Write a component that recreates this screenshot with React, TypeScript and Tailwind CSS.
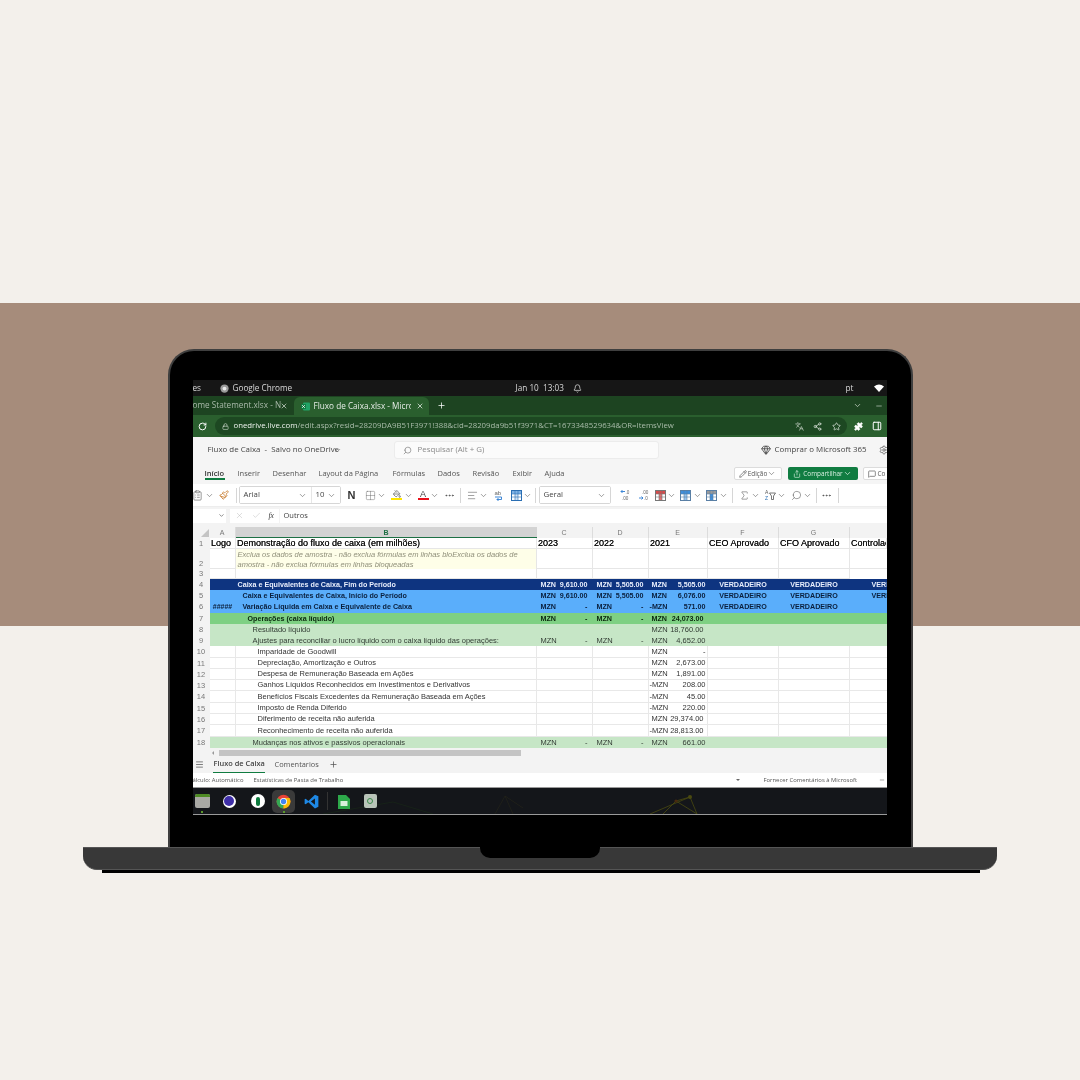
import {
  AlignLeft, ChevronDown, Gem, Lock, Menu, MessageSquare, MoreHorizontal, PaintBucket, Paintbrush, Pencil, Plus,
  Puzzle, RotateCw, Search, Settings, Share2, Sigma, Star, X, Check, ClipboardList, Bell, Minus, Grid2x2,
  PanelRight, Languages, Share,
} from "lucide-react";

const uiFont = "font-['Open_Sans',sans-serif]";

interface rowProps {
  n: number;
  label: string;
  indent: string;
  c?: string[];
  d?: string[];
  e?: string[];
  flags?: number;
  a?: string;
  bg: string;
  text: string;
  bold?: boolean;
}

const dash = ["MZN", "-"];

const rows: rowProps[] = [
  { n: 4, label: "Caixa e Equivalentes de Caixa, Fim do Período", indent: "pl-[2px]", c: ["MZN", "9,610.00"], d: ["MZN", "5,505.00"], e: ["MZN", "5,505.00"], flags: 3, bg: "bg-[#0e3480]", text: "text-[#e8eefc]", bold: true },
  { n: 5, label: "Caixa e Equivalentes de Caixa, Início do Período", indent: "pl-[7px]", c: ["MZN", "9,610.00"], d: ["MZN", "5,505.00"], e: ["MZN", "6,076.00"], flags: 3, bg: "bg-[#5aaefb]", text: "text-[#0a1f3c]", bold: true },
  { n: 6, label: "Variação Líquida em Caixa e Equivalente de Caixa", indent: "pl-[7px]", a: "#####", c: dash, d: dash, e: ["-MZN", "571.00"], flags: 2, bg: "bg-[#5aaefb]", text: "text-[#0a1f3c]", bold: true },
  { n: 7, label: "Operações (caixa líquido)", indent: "pl-[12px]", c: dash, d: dash, e: ["MZN", "24,073.00"], bg: "bg-[#7ed083]", text: "text-[#0b260e]", bold: true },
  { n: 8, label: "Resultado líquido", indent: "pl-[17px]", e: ["MZN", "18,760.00"], bg: "bg-[#c6e6c6]", text: "text-[#333d35]" },
  { n: 9, label: "Ajustes para reconciliar o lucro líquido com o caixa líquido das operações:", indent: "pl-[17px]", c: dash, d: dash, e: ["MZN", "4,652.00"], bg: "bg-[#c6e6c6]", text: "text-[#333d35]" },
  { n: 10, label: "Imparidade de Goodwill", indent: "pl-[22px]", e: ["MZN", "-"], bg: "bg-white", text: "text-[#333]" },
  { n: 11, label: "Depreciação, Amortização e Outros", indent: "pl-[22px]", e: ["MZN", "2,673.00"], bg: "bg-white", text: "text-[#333]" },
  { n: 12, label: "Despesa de Remuneração Baseada em Ações", indent: "pl-[22px]", e: ["MZN", "1,891.00"], bg: "bg-white", text: "text-[#333]" },
  { n: 13, label: "Ganhos Líquidos Reconhecidos em Investimentos e Derivativos", indent: "pl-[22px]", e: ["-MZN", "208.00"], bg: "bg-white", text: "text-[#333]" },
  { n: 14, label: "Benefícios Fiscais Excedentes da Remuneração Baseada em Ações", indent: "pl-[22px]", e: ["-MZN", "45.00"], bg: "bg-white", text: "text-[#333]" },
  { n: 15, label: "Imposto de Renda Diferido", indent: "pl-[22px]", e: ["-MZN", "220.00"], bg: "bg-white", text: "text-[#333]" },
  { n: 16, label: "Diferimento de receita não auferida", indent: "pl-[22px]", e: ["MZN", "29,374.00"], bg: "bg-white", text: "text-[#333]" },
  { n: 17, label: "Reconhecimento de receita não auferida", indent: "pl-[22px]", e: ["-MZN", "28,813.00"], bg: "bg-white", text: "text-[#333]" },
  { n: 18, label: "Mudanças nos ativos e passivos operacionais", indent: "pl-[17px]", c: dash, d: dash, e: ["MZN", "661.00"], bg: "bg-[#c6e6c6]", text: "text-[#333d35]" },
];

const tallRows = [6, 10, 14, 17];

const gridCols = "grid grid-cols-[17px_26px_301px_56px_56px_59px_71px_71px_37px] grid-rows-[minmax(0,1fr)]";

const ChromeLogo = ({ size }: { size: number }) => (
  <svg width={size} height={size} viewBox="0 0 24 24">
    <circle cx="12" cy="12" r="11" fill="#ea4335" />
    <path d="M12 12 L2.4 6.5 A11 11 0 0 0 12 23 Z" fill="#34a853" />
    <path d="M12 12 L12 23 A11 11 0 0 0 21.6 6.5 L12 6.5 Z" fill="#fbbc05" />
    <circle cx="12" cy="12" r="5.6" fill="#fff" />
    <circle cx="12" cy="12" r="4.3" fill="#4285f4" />
  </svg>
);

// small table glyph used by the conditional format / table style buttons
const MiniTable = ({ head, cell, line, className = "" }: { head: string; cell: string; line: string; className?: string }) => (
  <svg width="11" height="11" viewBox="0 0 11 11" className={"shrink-0 " + className}>
    <rect x="0.5" y="0.5" width="10" height="10" fill="#fff" stroke={line} />
    <rect x="1" y="1" width="9" height="3" fill={head} />
    <rect x="4" y="4" width="3" height="6" fill={cell} />
    <path d="M0.5 4 H10.5 M0.5 7 H10.5 M4 0.5 V10.5 M7 0.5 V10.5" stroke={line} strokeWidth="0.6" />
  </svg>
);

const DecimalIcon = ({ top, bottom, left }: { top: string; bottom: string; left?: boolean }) => (
  <svg width="11" height="12" viewBox="0 0 11 12" className="shrink-0">
    <path d={left ? "M5 2.5 H1 M2.5 1 L1 2.5 L2.5 4" : "M1 9 H5 M3.5 7.5 L5 9 L3.5 10.5"} stroke="#2b7cd3" strokeWidth="0.9" fill="none" />
    <text x={left ? 5.5 : 4} y="4.5" fontSize="4.6" fill="#666" fontFamily="Liberation Sans">{top}</text>
    <text x={left ? 2 : 6} y="10.5" fontSize="4.6" fill="#666" fontFamily="Liberation Sans">{bottom}</text>
  </svg>
);

const Chev = ({ className = "" }: { className?: string }) => (
  <ChevronDown size={9} strokeWidth={1.5} className={"shrink-0 text-[#555] " + className} />
);

const Sep = ({ className = "" }: { className?: string }) => <div className={"w-px h-[15px] bg-[#d6d6d6] shrink-0 " + className} />;

const Money = ({ v, className }: { v?: string[]; className: string }) => (
  <div className={"flex justify-between items-center border-r border-[#e6e6e6] overflow-hidden " + className}>
    {v && (
      <>
        <span className={v[0] === "MZN" ? "ml-[2px]" : ""}>{v[0]}</span>
        <span className={v[1].length > 8 ? "mr-[2px]" : ""}>{v[1]}</span>
      </>
    )}
  </div>
);

const Row = ({ r }: { r: rowProps }) => {
  const white = r.bg === "bg-white";
  const line = white ? "border-b border-[#e8e8e8]" : "";
  const divider = white ? " border-r border-[#e8e8e8]" : "";
  const size = r.bold ? "text-[7.15px] font-bold " : "text-[7.5px] ";
  const height = tallRows.includes(r.n) ? "h-[12px] " : "h-[11px] ";
  return (
    <div className={gridCols + " " + height + "font-['Liberation_Sans',sans-serif] leading-[10px] " + size + r.text}>
      <div className="bg-[#f3f3f3] text-[#777] text-[7.5px] font-normal flex items-center justify-center">{r.n}</div>
      <div className={r.bg + " flex items-center justify-center text-[7px] " + line + divider}>{r.a}</div>
      <div className={r.bg + " flex items-center whitespace-nowrap " + r.indent + " " + line + divider}>{r.label}</div>
      <Money v={r.c} className={r.bg + " pl-[2px] pr-[4px] " + (white ? "border-[#e8e8e8] border-b" : "border-r-transparent")} />
      <Money v={r.d} className={r.bg + " pl-[2px] pr-[4px] " + (white ? "border-[#e8e8e8] border-b" : "border-r-transparent")} />
      <Money v={r.e} className={r.bg + " pl-[1px] pr-[1px] " + (white ? "border-[#e8e8e8] border-b" : "border-r-transparent")} />
      <div className={r.bg + " flex items-center justify-center " + line + divider}>{r.flags ? "VERDADEIRO" : ""}</div>
      <div className={r.bg + " flex items-center justify-center " + line + divider}>{r.flags ? "VERDADEIRO" : ""}</div>
      <div className={r.bg + " flex items-center whitespace-nowrap overflow-hidden pl-[22px] " + line}>{r.flags === 3 ? "VERDADEIRO" : ""}</div>
    </div>
  );
};

const TopBar = () => (
  <div className={"h-[16px] bg-[#161616] flex items-center text-[8.2px] text-[#d8d8d8] " + uiFont}>
    <span className="w-[27px]">es</span>
    <svg width="9" height="9" viewBox="0 0 24 24" className="shrink-0">
      <circle cx="12" cy="12" r="11" fill="#9a9a9a" />
      <circle cx="12" cy="12" r="5" fill="#e8e8e8" />
    </svg>
    <span className="ml-[4px] w-[283px]">Google Chrome</span>
    <span className="w-[57px]">Jan 10&nbsp; 13:03</span>
    <Bell size={9} className="shrink-0" />
    <span className="ml-[264px] w-[28px]">pt</span>
    <svg width="10" height="8" viewBox="0 0 10 8" className="shrink-0">
      <path d="M0 2.4 Q5 -1.4 10 2.4 L5 8 Z" fill="#fff" />
    </svg>
  </div>
);

const TabStrip = () => (
  <div className={"h-[19px] bg-[#1d4421] flex items-end text-[8.2px] " + uiFont}>
    <div className="w-[101px] h-[19px] flex items-center text-[#a9b9aa] whitespace-nowrap">
      <span className="w-[87px]">ome Statement.xlsx - N</span>
      <X size={8} className="text-[#dfe7df] shrink-0" />
    </div>
    <div className="w-[135px] h-[18px] bg-[#2a5f2e] rounded-t-[6px] flex items-center pl-[7px] text-[#e6ece6] whitespace-nowrap">
      <svg width="9" height="9" viewBox="0 0 9 9" className="shrink-0">
        <rect x="2" y="0.5" width="7" height="8" rx="1" fill="#21a366" />
        <rect x="0" y="2" width="5" height="5" rx="0.5" fill="#107c41" />
        <path d="M1 3 L4 6 M4 3 L1 6" stroke="#fff" strokeWidth="0.7" />
      </svg>
      <span className="ml-[4px] w-[97px] overflow-hidden">Fluxo de Caixa.xlsx - Micro</span>
      <X size={8} className="text-white shrink-0 ml-[5px]" />
    </div>
    <div className="h-[19px] flex items-center ml-[8px]">
      <Plus size={9} className="text-white" />
    </div>
    <div className="h-[19px] flex items-center ml-[407px]">
      <ChevronDown size={9} className="text-[#c8d4c8]" />
    </div>
    <div className="h-[19px] flex items-center ml-[13px]">
      <Minus size={8} className="text-[#c8d4c8]" />
    </div>
  </div>
);

const AddressBar = () => (
  <div className={"h-[22px] bg-[#2a5f2e] flex items-center text-[7.8px] " + uiFont}>
    <RotateCw size={9} strokeWidth={2.6} className="ml-[5px] text-white shrink-0" />
    <div className="ml-[8px] w-[632px] h-[18px] rounded-full bg-[#1d4822] flex items-center pl-[7px] whitespace-nowrap">
      <Lock size={7} className="text-[#d8e2d8] shrink-0" />
      <span className="ml-[5px] text-[#eef3ee]">onedrive.live.com</span>
      <span className="text-[#a9bcaa]">/edit.aspx?resid=28209DA9B51F3971!388&amp;cid=28209da9b51f3971&amp;CT=1673348529634&amp;OR=ItemsView</span>
      <Languages size={9} className="ml-auto text-[#b9c8ba] shrink-0" />
      <Share2 size={9} className="ml-[9px] text-[#d8e2d8] shrink-0" />
      <Star size={9} className="ml-[10px] mr-[6px] text-[#d8e2d8] shrink-0" />
    </div>
    <Puzzle size={9} fill="#fff" className="ml-[7px] text-white shrink-0" />
    <PanelRight size={10} strokeWidth={2.4} className="ml-[9px] text-white shrink-0" />
  </div>
);

const TitleRow = () => (
  <div className={"h-[26px] bg-[#f5f5f5] flex items-center text-[7.9px] text-[#444] whitespace-nowrap [&>*]:shrink-0 " + uiFont}>
    <span className="ml-[15px] w-[126px]">Fluxo de Caixa&nbsp; -&nbsp; Salvo no OneDrive</span>
    <Chev className="ml-[-1px]" />
    <div className="ml-[52px] w-[265px] h-[18px] bg-[#fbfbfb] border border-[#ececec] rounded-[3px] flex items-center pl-[8px] text-[#8a8a8a]">
      <Search size={9} className="-scale-x-100 shrink-0" />
      <span className="ml-[6px]">Pesquisar (Alt + G)</span>
    </div>
    <Gem size={10} className="ml-[102px] text-[#444]" />
    <span className="ml-[4px] w-[104px]">Comprar o Microsoft 365</span>
    <Settings size={10} className="text-[#666]" />
  </div>
);

const TabsRow = () => (
  <div className={"h-[21px] bg-[#f5f5f5] flex items-start pt-[4px] text-[7.5px] text-[#555] whitespace-nowrap [&>*]:shrink-0 " + uiFont}>
    <div className="ml-[12px] w-[33px] text-[#333] font-semibold relative h-[13px] leading-[13px]">
      Início
      <div className="absolute left-0 top-[11px] w-[20px] h-[1.5px] bg-[#107c41]" />
    </div>
    <span className="w-[35px] leading-[13px]">Inserir</span>
    <span className="w-[46px] leading-[13px]">Desenhar</span>
    <span className="w-[74px] leading-[13px]">Layout da Página</span>
    <span className="w-[45px] leading-[13px]">Fórmulas</span>
    <span className="w-[35px] leading-[13px]">Dados</span>
    <span className="w-[40px] leading-[13px]">Revisão</span>
    <span className="w-[32px] leading-[13px]">Exibir</span>
    <span className="w-[189px] leading-[13px]">Ajuda</span>
    <div className="w-[48px] h-[13px] bg-white border border-[#dcdcdc] rounded-[2px] flex items-center justify-center text-[6.4px]">
      <Pencil size={8} className="shrink-0 mr-[1px]" />
      Edição
      <Chev />
    </div>
    <div className="ml-[6px] w-[70px] h-[13px] bg-[#107c41] rounded-[2px] flex items-center justify-center text-[6.4px] text-[#d7eee0]">
      <Share size={8} className="shrink-0 mr-[2px]" />
      Compartilhar
      <ChevronDown size={9} className="shrink-0" />
    </div>
    <div className="ml-[5px] w-[30px] h-[13px] bg-white border border-[#dcdcdc] rounded-l-[2px] flex items-center pl-[4px] text-[6.4px]">
      <MessageSquare size={8} className="shrink-0 mr-[2px]" />
      Co
    </div>
  </div>
);

const Select = ({ text, className }: { text: string; className: string }) => (
  <div className={"h-[16px] bg-white flex items-center justify-between px-[4px] shrink-0 " + className}>
    <span>{text}</span>
    <Chev />
  </div>
);

const Toolbar = () => (
  <div className={"h-[23px] bg-white flex items-center text-[7.8px] text-[#444] border-b border-[#ededed] " + uiFont}>
    <ClipboardList size={11} strokeWidth={1.3} className="ml-[-1px] text-[#555] shrink-0" />
    <Chev className="ml-[2px]" />
    <Paintbrush size={10} className="ml-[5px] text-[#c87b2c] shrink-0" />
    <Sep className="ml-[7px]" />
    <div className="ml-[2px] w-[102px] flex rounded-[2px] border border-[#d6d6d6] shrink-0">
      <Select text="Arial" className="w-[72px] border-r border-[#e6e6e6]" />
      <Select text="10" className="w-[28px]" />
    </div>
    <span className="ml-[7px] w-[9px] text-[11px] leading-none font-bold text-[#333] font-['Liberation_Sans',sans-serif]">N</span>
    <Grid2x2 size={11} strokeWidth={1} className="ml-[8px] text-[#666] shrink-0" />
    <Chev className="ml-[1px]" />
    <div className="ml-[5px] w-[12px] flex flex-col items-center shrink-0">
      <PaintBucket size={8} className="text-[#555]" />
      <div className="w-[11px] h-[2.5px] bg-[#ffe600]" />
    </div>
    <Chev className="ml-[1px]" />
    <div className="ml-[5px] w-[11px] flex flex-col items-center shrink-0 text-[9px] leading-[8px] font-['Liberation_Sans',sans-serif]">
      A
      <div className="w-[11px] h-[2.5px] bg-[#e8101a]" />
    </div>
    <Chev className="ml-[1px]" />
    <MoreHorizontal size={11} className="ml-[5px] text-[#555] shrink-0" />
    <Sep className="ml-[5px]" />
    <AlignLeft size={11} strokeWidth={1.2} className="ml-[6px] text-[#555] shrink-0" />
    <Chev className="ml-[1px]" />
    <svg width="11" height="12" viewBox="0 0 11 12" className="ml-[5px] shrink-0">
      <text x="1.5" y="5.5" fontSize="6" fill="#666" fontFamily="Liberation Sans">ab</text>
      <path d="M2 8 H8.5 V10.5 H4 M5.5 9 L4 10.5 L5.5 12" stroke="#2b7cd3" strokeWidth="0.9" fill="none" />
    </svg>
    <MiniTable head="#7fb2e5" cell="#cfe2f5" line="#2b6fb3" className="ml-[7px]" />
    <Chev className="ml-[1px]" />
    <Sep className="ml-[3px]" />
    <div className="ml-[3px] w-[72px] rounded-[2px] border border-[#d6d6d6] shrink-0">
      <Select text="Geral" className="w-[70px] h-[15px]" />
    </div>
    <div className="ml-[9px] shrink-0">
      <DecimalIcon top=".0" bottom=".00" left />
    </div>
    <div className="ml-[7px] shrink-0">
      <DecimalIcon top=".00" bottom=".0" />
    </div>
    <MiniTable head="#d94b4b" cell="#e57373" line="#777" className="ml-[6px]" />
    <Chev className="ml-[1px]" />
    <MiniTable head="#3f8fdc" cell="#9cc6ee" line="#5a7fa5" className="ml-[4px]" />
    <Chev className="ml-[2px]" />
    <MiniTable head="#9a9a9a" cell="#3f8fdc" line="#5a7fa5" className="ml-[4px]" />
    <Chev className="ml-[2px]" />
    <Sep className="ml-[4px]" />
    <Sigma size={11} strokeWidth={1.2} className="ml-[6px] text-[#555] shrink-0" />
    <Chev className="ml-[1px]" />
    <svg width="11" height="12" viewBox="0 0 11 12" className="ml-[5px] shrink-0">
      <text x="0" y="5" fontSize="5" fill="#555" fontFamily="Liberation Sans">A</text>
      <text x="0" y="11" fontSize="5" fill="#2b6fb3" fontFamily="Liberation Sans">Z</text>
      <path d="M4.5 4 H10.5 L8.5 7 V10.5 L6.5 10.5 V7 Z" stroke="#555" strokeWidth="0.8" fill="none" />
    </svg>
    <Chev className="ml-[1px]" />
    <Search size={11} strokeWidth={1.2} className="ml-[5px] -scale-x-100 text-[#555] shrink-0" />
    <Chev className="ml-[1px]" />
    <Sep className="ml-[4px]" />
    <MoreHorizontal size={11} className="ml-[4px] text-[#555] shrink-0" />
    <Sep className="ml-[6px]" />
  </div>
);

const FormulaBar = () => (
  <div className={"h-[17px] bg-[#f3f3f3] flex items-center text-[7.5px] text-[#444] " + uiFont}>
    <div className="w-[33px] h-[14px] bg-white flex items-center justify-end pr-[1px] shrink-0">
      <ChevronDown size={7} />
    </div>
    <div className="ml-[4px] w-[49px] h-[14px] bg-white flex items-center shrink-0 pl-[5px]">
      <X size={9} strokeWidth={1} className="text-[#aaa]" />
      <Check size={9} strokeWidth={1} className="ml-[8px] text-[#aaa]" />
      <span className="ml-[8px] italic font-['Liberation_Serif',serif] text-[#333]">fx</span>
    </div>
    <div className="ml-[1px] flex-1 h-[14px] bg-white flex items-center pl-[4px]">Outros</div>
  </div>
);

const Sheet = () => {
  const head = "text-center text-[#777] text-[7px] border-r border-[#dcdcdc] leading-[11px]";
  const title = "text-[9px] [text-shadow:0_0_0.3px_#111] leading-[11px] text-[#111] whitespace-nowrap border-r border-b border-[#e6e6e6] pl-[1.5px]";
  const blank = "border-r border-b border-[#e6e6e6]";
  return (
    <div className="h-[232px] bg-[#f3f3f3] pt-[3px] font-['Liberation_Sans',sans-serif]">
      <div className={gridCols + " h-[11px]"}>
        <div className="relative">
          <div className="absolute right-[1px] bottom-[1px] w-0 h-0 border-l-[8px] border-l-transparent border-b-[8px] border-b-[#c4c4c4]" />
        </div>
        <div className={head}>A</div>
        <div className="text-center text-[#1d7044] font-bold text-[7px] leading-[11px] bg-[#d3d3d3] border-b border-[#1d7044]">B</div>
        <div className={head}>C</div>
        <div className={head}>D</div>
        <div className={head}>E</div>
        <div className={head}>F</div>
        <div className={head}>G</div>
        <div className="text-[7px]" />
      </div>
      <div className={gridCols + " h-[11px] bg-white"}>
        <div className="bg-[#f3f3f3] text-[#777] text-[7.5px] text-center leading-[11px]">1</div>
        <div className={title}>Logo</div>
        <div className={title}>Demonstração do fluxo de caixa (em milhões)</div>
        <div className={title}>2023</div>
        <div className={title}>2022</div>
        <div className={title}>2021</div>
        <div className={title}>CEO Aprovado</div>
        <div className={title}>CFO Aprovado</div>
        <div className={title + " overflow-hidden"}>Controlaç</div>
      </div>
      <div className={gridCols + " h-[20px] bg-white"}>
        <div className="bg-[#f3f3f3] text-[#777] text-[7.5px] text-center pt-[9px] leading-[11px]">2</div>
        <div className={blank} />
        <div className="bg-[#fefee8] text-[7.5px] leading-[9.5px] italic text-[#8f8f7a] pl-[2px] pt-[1px] border-r border-[#e6e6e6]">
          Exclua os dados de amostra - não exclua fórmulas em linhas bloExclua os dados de amostra - não exclua fórmulas em linhas bloqueadas
        </div>
        <div className={blank} />
        <div className={blank} />
        <div className={blank} />
        <div className={blank} />
        <div className={blank} />
        <div className="border-b border-[#e6e6e6]" />
      </div>
      <div className={gridCols + " h-[10px] bg-white"}>
        <div className="bg-[#f3f3f3] text-[#777] text-[7.5px] text-center leading-[10px]">3</div>
        <div className={blank} />
        <div className={blank} />
        <div className={blank} />
        <div className={blank} />
        <div className={blank} />
        <div className={blank} />
        <div className={blank} />
        <div />
      </div>
      {rows.map((r) => (
        <Row key={r.n} r={r} />
      ))}
      <div className="h-[8px] flex items-center pl-[19px] pt-[1px]">
        <div className="w-0 h-0 border-y-[2px] border-y-transparent border-r-[2px] border-r-[#999] shrink-0" />
        <div className="ml-[5px] w-[302px] h-[6px] bg-[#c4c4c4]" />
      </div>
    </div>
  );
};

const SheetTabs = () => (
  <div className={"h-[17px] bg-[#f3f3f3] flex items-center text-[7.4px] text-[#555] whitespace-nowrap " + uiFont}>
    <Menu size={9} className="ml-[2px] shrink-0" />
    <div className="ml-[10px] w-[61px] h-[17px] relative leading-[15px] font-semibold text-[#444]">
      Fluxo de Caixa
      <div className="absolute left-[-1px] bottom-0 w-[52px] h-[1px] bg-[#107c41]" />
    </div>
    <span className="w-[52px]">Comentarios</span>
    <Plus size={9} className="ml-[2px] shrink-0" />
  </div>
);

const StatusBar = () => (
  <div className={"h-[14px] bg-white flex items-center text-[5.9px] text-[#555] whitespace-nowrap " + uiFont}>
    <span className="w-[61px]">álculo: Automático</span>
    <span className="w-[482px]">Estatísticas de Pasta de Trabalho</span>
    <div className="w-0 h-0 border-x-[2px] border-x-transparent border-t-[2px] border-t-[#666] shrink-0" />
    <span className="ml-[24px] w-[115px]">Fornecer Comentários à Microsoft</span>
    <Minus size={6} className="shrink-0" />
  </div>
);

const Taskbar = () => (
  <div className="h-[28px] bg-[#14161a] border-y border-[#9a9a9a] relative flex items-center overflow-hidden">
    <svg width="694" height="26" viewBox="0 0 694 26" className="absolute left-0 top-0">
      <path d="M457 26 L497 9 L483 13 L470 26 M483 13 L504 26 M497 9 L504 26" stroke="#4a4a10" strokeWidth="0.8" fill="none" />
      <circle cx="497" cy="9" r="2" fill="#4a4a10" />
      <circle cx="483" cy="13" r="1.6" fill="#4a2a10" />
      <path d="M302 26 L312 8 L320 26 M312 8 L330 20" stroke="#26261a" strokeWidth="0.6" fill="none" />
      <path d="M200 14 L130 26 M200 14 L240 26" stroke="#1a2a18" strokeWidth="0.6" fill="none" />
    </svg>
    <svg width="15" height="14" viewBox="0 0 15 14" className="relative ml-[2px] shrink-0">
      <rect x="0" y="0" width="15" height="14" rx="2" fill="#a9a9a4" />
      <path d="M0 2 a2 2 0 0 1 2 -2 H13 a2 2 0 0 1 2 2 V3 H0 Z" fill="#4e8a24" />
    </svg>
    <div className="relative ml-[13px] w-[13px] h-[13px] rounded-full bg-white flex items-center justify-center shrink-0">
      <div className="w-[10px] h-[10px] rounded-full bg-[#3f2fa8]" />
    </div>
    <div className="relative ml-[15px] w-[14px] h-[14px] rounded-full bg-white flex items-center justify-center shrink-0">
      <div className="w-[4px] h-[9px] rounded-full bg-[#0d7a3e]" />
    </div>
    <div className="relative ml-[7px] w-[23px] h-[23px] rounded-[5px] bg-[#3a3a3a] flex items-center justify-center shrink-0">
      <ChromeLogo size={15} />
      <div className="absolute left-[11px] bottom-0 w-[2px] h-[2px] bg-[#5a9a2a]" />
    </div>
    <svg width="15" height="15" viewBox="0 0 24 24" className="relative ml-[9px] shrink-0">
      <path d="M17.5 1 L23 3.5 V20.5 L17.5 23 L7 13 L2.6 16.5 L1 15.5 V8.5 L2.6 7.5 L7 11 Z M17.5 7 L11 12 L17.5 17 Z" fill="#1e88e5" fillRule="evenodd" />
    </svg>
    <div className="relative ml-[8px] w-px h-[18px] bg-[#333] shrink-0" />
    <div className="relative ml-[10px] shrink-0 flex">
      <svg width="12" height="15" viewBox="0 0 12 15">
        <path d="M0 1 H8 L12 5 V15 H0 Z" fill="#2da84a" />
        <rect x="2.5" y="7" width="7" height="5" fill="#d7f0dc" />
      </svg>
      <div className="absolute left-[5px] top-[20px] w-[2px] h-[2px] bg-[#5a9a2a]" />
    </div>
    <div className="relative ml-[14px] w-[13px] h-[14px] rounded-[2px] bg-[#b9c4b9] flex items-center justify-center shrink-0">
      <div className="w-[6px] h-[6px] rounded-full border border-[#3a8a4a]" />
    </div>
    <div className="absolute left-[8px] top-[23px] w-[2px] h-[2px] bg-[#5a9a2a]" />
  </div>
);

const Screen = () => (
  <div className="w-[694px] h-[435px] flex flex-col overflow-hidden blur-[0.4px]">
    <TopBar />
    <TabStrip />
    <AddressBar />
    <TitleRow />
    <TabsRow />
    <Toolbar />
    <FormulaBar />
    <Sheet />
    <SheetTabs />
    <StatusBar />
    <Taskbar />
  </div>
);

const App = () => {
  return (
    <div className="relative w-[1080px] h-[1080px] overflow-hidden bg-[#f3f0eb]">
      <div className="h-[303px]" />
      <div className="h-[323px] bg-[#a68c7b]" />

      {/* the laptop sits over both page bands */}
      <div className="absolute left-[83px] top-[349px] w-[914px] flex flex-col items-center">
        <div className="w-[745px] h-[498px] bg-black border-x-[2px] border-t-[2px] border-[#3f3f3f] rounded-t-[26px] pt-[29px] pl-[23px]">
          <Screen />
        </div>
        <div className="w-[914px] h-[23px] bg-[#383838] border-y border-[#555] rounded-b-[14px] flex justify-center">
          <div className="w-[120px] h-[11px] bg-black rounded-b-[10px] mt-[-1px]" />
        </div>
        <div className="w-[878px] h-[3px] bg-black ml-[2px]" />
      </div>
    </div>
  );
};

export default App;
